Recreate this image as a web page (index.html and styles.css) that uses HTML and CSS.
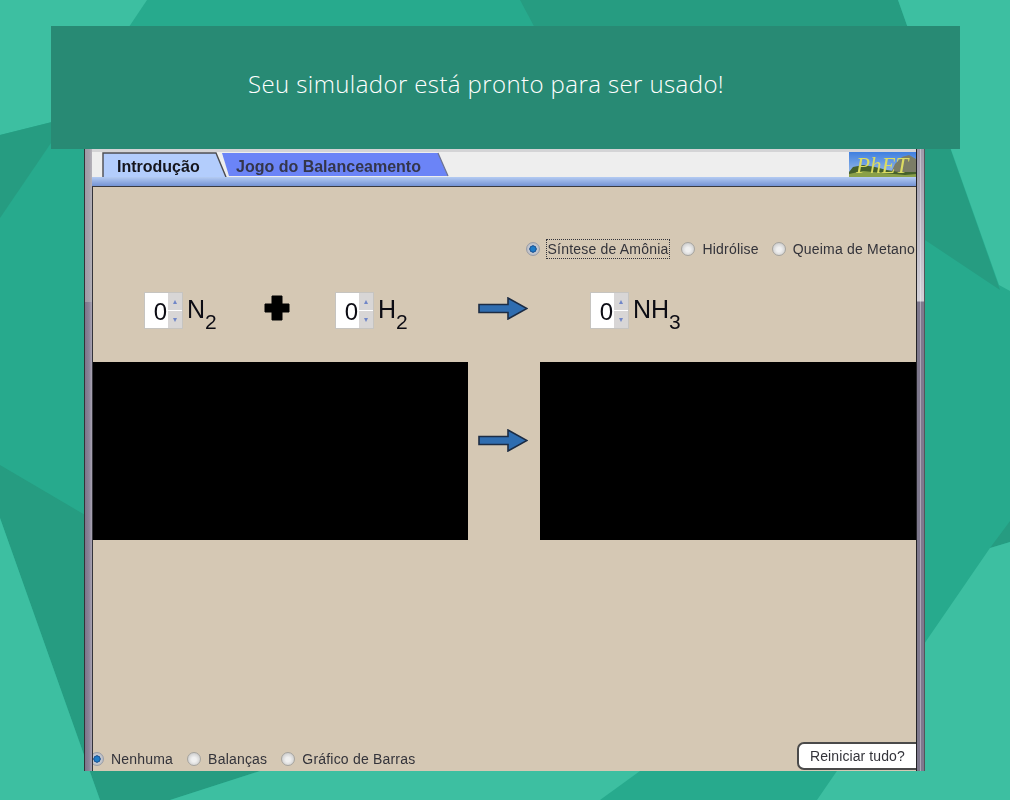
FILE: index.html
```html
<!DOCTYPE html>
<html lang="pt-BR">
<head>
<meta charset="utf-8">
<title>Simulador</title>
<link rel="stylesheet" href="styles.css">
</head>
<body>
<div class="page">
  <svg class="backdrop" viewBox="0 0 1010 800" aria-hidden="true">
    <rect class="mid" width="1010" height="800"/>
    <polygon class="dark" points="520,0 898,0 1000,290 925,240 600,150"/>
    <polygon class="light" points="0,0 147,0 68,118 0,135"/>
    <polygon class="dark" points="0,135 68,118 0,218"/>
    <polygon class="dark" points="0,465 400,700 260,771 170,800 100,800 0,518"/>
    <polygon class="light" points="0,518 100,800 0,800"/>
    <polygon class="light" points="170,800 260,771 640,771 600,800"/>
    <polygon class="light" points="898,0 1010,0 1010,291 999,285"/>
    <polygon class="dark" points="1010,521 990,548 1010,542"/>
    <polygon class="light" points="1010,542 990,548 817,800 1010,800"/>
  </svg>

  <header class="banner">Seu simulador está pronto para ser usado!</header>

  <main class="window">
    <div class="frame frame-left"></div>
    <div class="content">
      <nav class="tabbar">
        <div class="tab tab-active">
          <svg class="tab-shape" viewBox="0 0 125 25" aria-hidden="true">
            <polygon class="tab-fill-active" points="1,25 1,1 114,1 124,25"/>
            <polyline class="tab-edge" points="1,25 1,1 114,1 124,25"/>
          </svg>
          <span class="tab-label tab-label-active">Introdução</span>
        </div>
        <div class="tab tab-other">
          <svg class="tab-shape" viewBox="0 0 228 25" aria-hidden="true">
            <polygon class="tab-fill-other" points="8,24 1,1 217,1 227,24"/>
            <line class="tab-edge-soft" x1="217" y1="1" x2="227" y2="24"/>
          </svg>
          <span class="tab-label">Jogo do Balanceamento</span>
        </div>
        <svg class="logo" viewBox="0 0 67 25" role="img" aria-label="PhET">
          <defs>
            <linearGradient id="sky" x1="0" y1="0" x2="0" y2="1">
              <stop offset="0" stop-color="#3f7fe0"/>
              <stop offset="1" stop-color="#a8c4e8"/>
            </linearGradient>
          </defs>
          <rect width="67" height="25" fill="url(#sky)"/>
          <polygon points="40,25 46,12 53,5 60,3 67,7 67,25" fill="#7b7d66"/>
          <polygon points="0,20 4,15 14,13 26,15 38,18 50,20 67,20 67,25 0,25" fill="#46602c"/>
          <polygon points="0,25 0,22 14,19 34,21 56,23 67,22 67,25" fill="#8aa048"/>
          <text class="logo-text" x="7" y="21">PhET</text>
        </svg>
      </nav>
      <div class="tabstrip"></div>

      <section class="panel">
        <div class="radio-row">
          <label class="radio-item focus"><i class="radio on"></i><span class="focus-box">Síntese de Amônia</span></label>
          <label class="radio-item item-second"><i class="radio"></i><span>Hidrólise</span></label>
          <label class="radio-item item-third"><i class="radio"></i><span>Queima de Metano</span></label>
        </div>

        <div class="equation">
          <div class="term term-a">
            <div class="spinner"><span class="value">0</span><span class="steps"><b class="step">▴</b><b class="step">▾</b></span></div>
            <span class="formula">N<sub>2</sub></span>
          </div>
          <svg class="plus" viewBox="0 0 26 26" aria-hidden="true"><polygon points="8,1 18,1 18,9 25,9 25,17 18,17 18,25 8,25 8,17 1,17 1,9 8,9"/></svg>
          <div class="term term-b">
            <div class="spinner"><span class="value">0</span><span class="steps"><b class="step">▴</b><b class="step">▾</b></span></div>
            <span class="formula">H<sub>2</sub></span>
          </div>
          <svg class="arrow arrow-eq" viewBox="0 0 50 23" aria-hidden="true"><polygon points="1,7.5 30,7.5 30,1 49,11.5 30,22 30,15.5 1,15.5"/></svg>
          <div class="term">
            <div class="spinner"><span class="value">0</span><span class="steps"><b class="step">▴</b><b class="step">▾</b></span></div>
            <span class="formula">NH<sub>3</sub></span>
          </div>
        </div>

        <div class="boxes">
          <div class="box box-left"></div>
          <svg class="arrow arrow-mid" viewBox="0 0 50 23" aria-hidden="true"><polygon points="1,7.5 30,7.5 30,1 49,11.5 30,22 30,15.5 1,15.5"/></svg>
          <div class="box box-right"></div>
        </div>

        <div class="bottom-row">
          <div class="radio-group">
            <label class="radio-item"><i class="radio on"></i><span>Nenhuma</span></label>
            <label class="radio-item"><i class="radio"></i><span>Balanças</span></label>
            <label class="radio-item"><i class="radio"></i><span>Gráfico de Barras</span></label>
          </div>
          <button class="reset" type="button">Reiniciar tudo?</button>
        </div>
      </section>
    </div>
    <div class="frame frame-right"></div>
  </main>
</div>
</body>
</html>
```
FILE: styles.css
```css
* { box-sizing: border-box; }

html, body { margin: 0; padding: 0; }

body {
  width: 1010px;
  height: 800px;
  overflow: hidden;
  background: #26a98c;
  font-family: "Liberation Sans", Arial, sans-serif;
}

.page {
  position: relative;
  width: 1010px;
  height: 800px;
  padding-top: 26px;
  overflow: hidden;
}

.backdrop {
  position: absolute;
  left: 0;
  top: 0;
  width: 1010px;
  height: 800px;
}
.mid { fill: #27aa8d; }
.dark { fill: #269c81; }
.light { fill: #3dbfa1; }

.banner {
  position: relative;
  margin-left: 51px;
  width: 909px;
  height: 123px;
  padding-right: 39px;
  background: #288a74;
  color: #ffffff;
  font-family: "Open Sans", sans-serif;
  font-weight: 300;
  font-size: 24px;
  letter-spacing: 0.4px;
  line-height: 116px;
  text-align: center;
}

.window {
  position: relative;
  display: flex;
  margin-left: 84px;
  width: 841px;
  height: 622px;
  filter: blur(0.45px);
}

.frame {
  flex: none;
  height: 100%;
}
.frame-left {
  width: 8px;
  border-left: 1px solid #333338;
  background:
    linear-gradient(rgba(190, 190, 190, 0.5) 0 153px, transparent 153px),
    linear-gradient(90deg, #7b758a, #8b8499 60%, #aaa5b4);
}
.frame-right {
  width: 9px;
  border-left: 1px solid #222226;
  border-right: 1px solid #55555a;
  background:
    linear-gradient(rgba(255, 255, 255, 0.25), rgba(255, 255, 255, 0.65) 152px, transparent 153px),
    linear-gradient(90deg, #7d778c 0 40%, #aba6b6 50%, #7f798e 60%);
}

.content {
  flex: 1;
  min-width: 0;
  display: flex;
  flex-direction: column;
}

.tabbar {
  flex: none;
  display: flex;
  align-items: flex-end;
  height: 28px;
  padding-left: 10px;
  background: #eeeeee;
  border-top: 3px solid #d4d4d6;
}

.tab {
  position: relative;
  flex: none;
  height: 25px;
  display: flex;
  align-items: center;
  padding-top: 4px;
}
.tab-active { width: 125px; z-index: 1; padding-left: 15px; }
.tab-other { width: 228px; margin-left: -6px; padding-left: 15px; }

.tab-shape {
  position: absolute;
  left: 0;
  top: 0;
  width: 100%;
  height: 100%;
}
.tab-fill-active { fill: #b3cdfc; }
.tab-edge { fill: none; stroke: #4c4c50; stroke-width: 1.4; }
.tab-fill-other { fill: #6b84f7; }
.tab-edge-soft { stroke: #6d7390; stroke-width: 1.2; }

.tab-label {
  position: relative;
  font-size: 16px;
  font-weight: 700;
  color: #34364a;
  white-space: nowrap;
}
.tab-label-active { color: #15151c; }

.logo {
  flex: none;
  width: 67px;
  height: 25px;
  margin-left: auto;
}
.logo-text {
  font-family: "Liberation Serif", serif;
  font-style: italic;
  font-size: 23px;
  fill: #dcdc62;
}

.tabstrip {
  flex: none;
  height: 10px;
  background: linear-gradient(#b4cbf2, #7493d4);
  border-bottom: 1px solid #3a3a3e;
}

.panel {
  flex: 1;
  min-height: 0;
  display: flex;
  flex-direction: column;
  background: #d5c8b4;
  border-left: 1px solid #33333a;
  overflow: hidden;
  color: #33333a;
  font-size: 14px;
}

.radio-row {
  flex: none;
  display: flex;
  justify-content: flex-end;
  margin-top: 52px;
  margin-right: 1px;
  height: 20px;
  white-space: nowrap;
}

.radio-item {
  display: flex;
  align-items: center;
  gap: 7px;
  letter-spacing: 0.2px;
  white-space: nowrap;
}
.item-second { margin-left: 11px; }
.item-third { margin-left: 13px; }

.focus-box {
  height: 20px;
  line-height: 18px;
  padding: 0 1px;
  border: 1px dotted #33333a;
  margin-left: -1px;
}

.radio {
  flex: none;
  display: block;
  width: 14px;
  height: 14px;
  border-radius: 50%;
  border: 1px solid #a6a49f;
  background: radial-gradient(circle at 50% 55%, #f0f0f0 0 25%, #bdbdbd 100%);
}
.radio.on {
  border-color: #9a9da6;
  background: radial-gradient(circle at 50% 50%, #1e7cc8 0 24%, #164a8a 40%, #c8cbd2 46%, #a9acb6 100%);
}

.equation {
  flex: none;
  display: flex;
  margin-top: 33px;
  height: 38px;
  padding-left: 51px;
}

.term {
  flex: none;
  display: flex;
  gap: 4px;
  color: #0c0c14;
}
.term-a { width: 119px; }
.term-b { width: 143px; }

.spinner {
  flex: none;
  display: flex;
  width: 39px;
  height: 37px;
  border: 1px solid #c6c4c0;
  background: #ffffff;
}
.value {
  flex: 1;
  font-size: 24px;
  line-height: 37px;
  text-align: right;
  padding-right: 1px;
}
.steps {
  flex: none;
  width: 14px;
  display: flex;
  flex-direction: column;
  gap: 1px;
  background: #ffffff;
}
.step {
  flex: 1;
  display: flex;
  align-items: center;
  justify-content: center;
  background: #d8d6d6;
  font-size: 8px;
  font-weight: 400;
  color: #7086c8;
}

.formula {
  font-size: 25px;
  line-height: 34px;
  white-space: nowrap;
}
.formula sub {
  font-size: 21px;
  line-height: 0;
  vertical-align: -11px;
}

.plus {
  flex: none;
  width: 26px;
  height: 26px;
  margin: 3px 45px 0 1px;
  fill: #000000;
  stroke: #000000;
  stroke-width: 1;
  stroke-linejoin: round;
}

.arrow {
  flex: none;
  width: 50px;
  height: 23px;
  fill: #2f6db0;
  stroke: #1c2c44;
  stroke-width: 1.6;
}
.arrow-eq {
  margin: 5px 62px 0 0;
}
.arrow-mid {
  margin-bottom: 22px;
}

.boxes {
  flex: none;
  display: flex;
  align-items: center;
  margin-top: 32px;
  height: 178px;
}
.box {
  height: 100%;
  background: #000000;
}
.box-left { width: 375px; margin-right: 10px; }
.box-right { width: 376px; margin-left: 12px; }

.bottom-row {
  flex: none;
  display: flex;
  justify-content: space-between;
  align-items: flex-end;
  margin-top: auto;
  margin-bottom: 1px;
}

.radio-group {
  display: flex;
  gap: 14px;
  margin-bottom: 3px;
  margin-left: -3px;
}

.reset {
  width: 125px;
  height: 28px;
  margin-right: -6px;
  padding: 0 0 0 11px;
  text-align: left;
  font-family: "Liberation Sans", Arial, sans-serif;
  font-size: 14px;
  letter-spacing: 0.1px;
  color: #33333a;
  background: #ffffff;
  border: 2px solid #4a4a4a;
  border-radius: 7px;
}
```
